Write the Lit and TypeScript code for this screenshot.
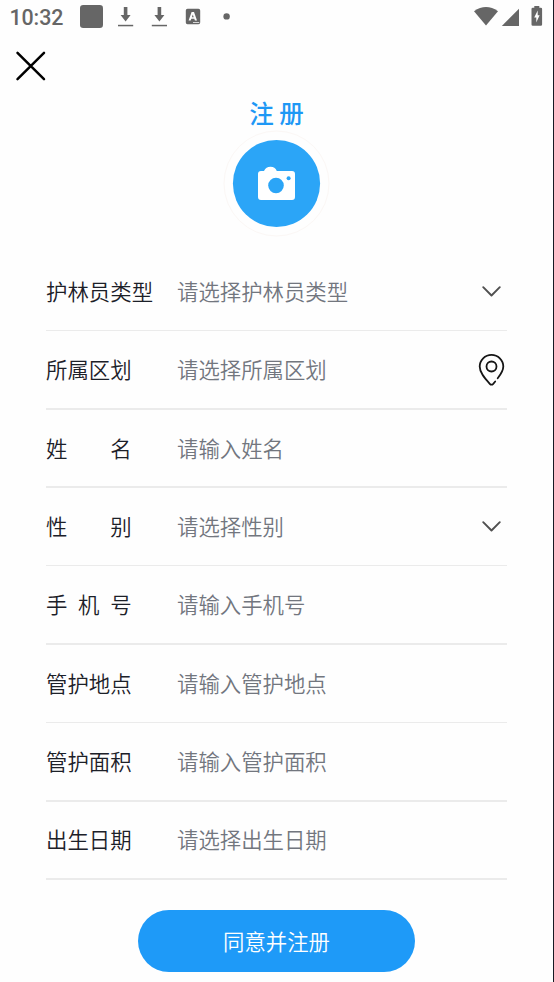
import { LitElement, html, css, svg, nothing } from "lit";
import { customElement, property } from "lit/decorators.js";

type Trailing = "chevron" | "pin" | "none";

interface Field {
  label: string;
  placeholder: string;
  trailing: Trailing;
}

const FIELDS: Field[] = [
  { label: "护林员类型", placeholder: "请选择护林员类型", trailing: "chevron" },
  { label: "所属区划", placeholder: "请选择所属区划", trailing: "pin" },
  { label: "姓名", placeholder: "请输入姓名", trailing: "none" },
  { label: "性别", placeholder: "请选择性别", trailing: "chevron" },
  { label: "手机号", placeholder: "请输入手机号", trailing: "none" },
  { label: "管护地点", placeholder: "请输入管护地点", trailing: "none" },
  { label: "管护面积", placeholder: "请输入管护面积", trailing: "none" },
  { label: "出生日期", placeholder: "请选择出生日期", trailing: "none" },
];

@customElement("status-bar")
class StatusBar extends LitElement {
  static styles = css`
    :host {
      display: flex;
      justify-content: space-between;
      height: 34px;
      padding: 0 9px 0 9.5px;
      color: #666;
      font: 500 21.4px/35px Roboto, "Noto Sans", sans-serif;
    }
    .time {
      width: 70.5px;
      letter-spacing: -0.1px;
    }
    .group {
      display: flex;
    }
    svg {
      display: block;
      fill: currentColor;
    }
  `;

  private arrow(x: number) {
    return svg`<g transform="translate(${x} 0)">
      <path d="M5.800 7h3.600v8h3.200L7.600 21.400 2.600 15h3.200z"/>
      <rect x="0" y="24.800" width="15.200" height="1.500"/>
    </g>`;
  }

  render() {
    return html`
      <div class="group">
        <div class="time">10:32</div>
        <svg width="152" height="34" viewBox="80 0 152 34">
          <rect x="80" y="5" width="23" height="23" rx="3.200" />
          ${this.arrow(118)}${this.arrow(151.8)}
          <path
            fill-rule="evenodd"
            d="M187.500 8.800h11a1.700 1.700 0 0 1 1.700 1.700v12a1.700 1.700 0 0 1-1.700 1.700h-11a1.700 1.700 0 0 1-1.700-1.700v-12a1.700 1.700 0 0 1 1.700-1.700zM191.600 12l-3 8.600h2.100l.6-1.800h3l.6 1.800h2.100l-3-8.600zM192.800 14.400l.9 2.800h-1.800zM193 22.200h6.200v.8H193z"
          />
          <circle cx="226.600" cy="16.400" r="3.200" />
        </svg>
      </div>
      <svg width="70" height="34" viewBox="474 0 70 34">
        <path d="M474 11.200Q486 2.800 498 11.200L486 25.600z" />
        <path d="M519 8.700V26h-17.200z" />
        <path
          fill-rule="evenodd"
          d="M534.300 7.700V6h5v1.700h1.500a1.300 1.300 0 0 1 1.300 1.300v15.500a1.300 1.300 0 0 1-1.300 1.300h-8a1.300 1.300 0 0 1-1.300-1.300V9a1.300 1.300 0 0 1 1.300-1.300zM537.700 10.500l-3.500 7h2.100v5l3.300-7.200h-1.900z"
        />
      </svg>
    `;
  }
}

@customElement("form-field")
class FormField extends LitElement {
  @property() label = "";
  @property() placeholder = "";
  @property() trailing: Trailing = "none";

  static styles = css`
    :host {
      display: flex;
      flex-direction: column;
      height: 78.4px;
    }
    .row {
      flex: 1;
      display: flex;
      align-items: center;
      font-size: 21.4px;
      font-weight: 350;
      line-height: 32px;
    }
    .label {
      display: flex;
      justify-content: space-between;
      min-width: 85.6px;
      color: #1c2028;
    }
    .cell {
      width: 131px;
      display: flex;
    }
    .cell,
    .hint {
      padding-bottom: 1px;
    }
    .hint {
      flex: 1;
      color: #72767e;
    }
    .rule {
      height: 1.5px;
      background: #ebebeb;
    }
    svg {
      display: block;
      fill: none;
      stroke-linecap: round;
      stroke-linejoin: round;
    }
    .chevron {
      stroke: #505050;
      stroke-width: 1.9;
    }
    .pin {
      stroke: #151515;
      stroke-width: 1.8;
    }
  `;

  private icon() {
    if (this.trailing === "chevron") {
      return html`<svg class="chevron" width="30" height="32" viewBox="0 0 30 32">
        <path d="M6.200 12.200L14.500 20.500L22.800 12.200" />
      </svg>`;
    }
    if (this.trailing === "pin") {
      return html`<svg class="pin" width="30" height="34" viewBox="0 0 30 34">
        <circle cx="14.500" cy="13.500" r="5" />
        <path
          d="M20.700 25.200C24.200 20.800 26.300 17.300 26.300 13.500A11.800 11.600 0 0 0 2.700 13.500C2.700 19.700 7.600 25.200 12.800 30.800Q14.500 32.600 16.200 30.800L18.200 28.500"
        />
      </svg>`;
    }
    return nothing;
  }

  render() {
    return html`
      <div class="row">
        <div class="cell">
          <div class="label">${[...this.label].map((c) => html`<span>${c}</span>`)}</div>
        </div>
        <div class="hint">${this.placeholder}</div>
        ${this.icon()}
      </div>
      <div class="rule"></div>
    `;
  }
}

@customElement("app-root")
class AppRoot extends LitElement {
  static styles = css`
    :host {
      display: flex;
      flex-direction: column;
      box-sizing: border-box;
      height: 982px;
      overflow: hidden;
      background: #fefefe;
      border-right: 1px solid #171a24;
      font-family: "Noto Sans CJK SC", sans-serif;
    }
    .nav {
      height: 61px;
      padding: 16px 0 0 15px;
      box-sizing: border-box;
    }
    .close {
      display: block;
      fill: none;
      stroke: #000;
      stroke-width: 2.5;
      stroke-linecap: round;
    }
    .title {
      margin: 0;
      height: 35px;
      color: #1e98f5;
      font-size: 24.5px;
      font-weight: 500;
      line-height: 35px;
      text-align: center;
    }
    .avatar {
      display: block;
      margin: 0 auto;
    }
    .form {
      margin: 15.8px 46px 0;
    }
    .submit {
      margin: 30px auto 0;
      width: 277px;
      height: 62px;
      padding: 0;
      border: 0;
      border-radius: 31px;
      background: #1e9af8;
      color: #fff;
      font: 350 21.4px/62px "Noto Sans CJK SC", sans-serif;
    }
  `;

  render() {
    return html`
      <status-bar></status-bar>
      <div class="nav">
        <svg class="close" width="32" height="32" viewBox="0 0 32 32">
          <path d="M2.500 2.800L29 29.200M29 2.800L2.500 29.200" />
        </svg>
      </div>
      <h1 class="title">注 册</h1>
      <svg class="avatar" width="107" height="107" viewBox="0 0 107 107">
        <circle cx="53.500" cy="53.500" r="52.500" fill="none" stroke="#fbf7f5" />
        <circle cx="53.500" cy="53.500" r="43.600" fill="#2ba5f7" />
        <path
          fill="#fff"
          d="M38 41H41Q43 36.800 47.500 36.800T53.800 41H69A3 3 0 0 1 72 44V67A3 3 0 0 1 69 70H38A3 3 0 0 1 35 67V44A3 3 0 0 1 38 41z"
        />
        <circle cx="53" cy="55.500" r="7.800" fill="#2ba5f7" />
        <circle cx="65.600" cy="48.300" r="2" fill="#2ba5f7" />
      </svg>
      <div class="form">
        ${FIELDS.map(
          (f) => html`<form-field
            .label=${f.label}
            .placeholder=${f.placeholder}
            .trailing=${f.trailing}
          ></form-field>`
        )}
      </div>
      <button class="submit">同意并注册</button>
    `;
  }
}
